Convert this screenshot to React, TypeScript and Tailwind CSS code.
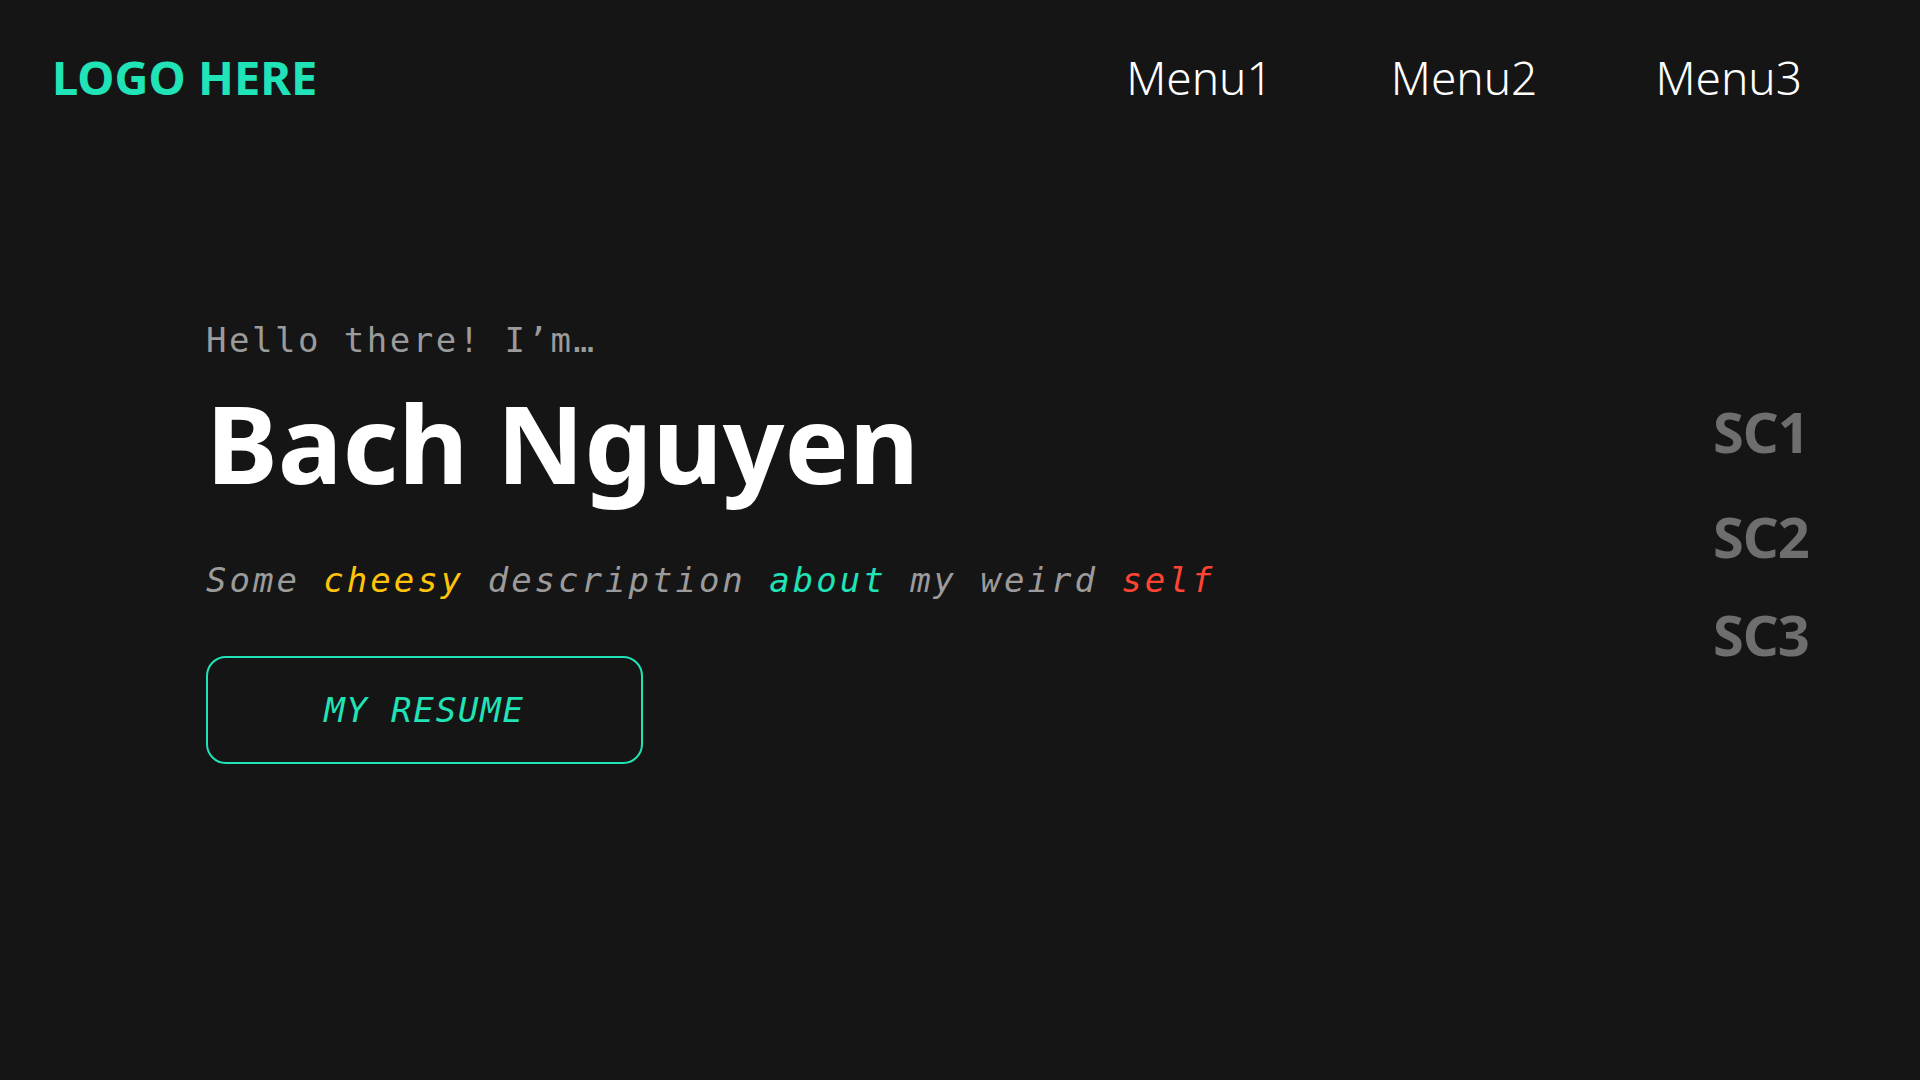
export default function App() {
  const sans = "font-['Noto_Sans',sans-serif]";
  const mono = "font-['DejaVu_Sans_Mono',monospace]";
  return (
    <div className="min-h-[1080px] w-full bg-[#151515] text-white">
      <header className="flex items-start justify-between pl-[52px] pr-[118px] pt-[54px]">
        <div className={`${sans} text-[47px] font-bold leading-[46px] text-[#21e3b8]`}>LOGO HERE</div>
        <nav className={`${sans} flex gap-[118px] text-[46px] font-light leading-[46px] text-white`}>
          <a>Menu1</a>
          <a>Menu2</a>
          <a>Menu3</a>
        </nav>
      </header>
      <main className="flex items-start justify-between pl-[206px] pr-[107px] pt-[223px]">
        <section className="flex flex-col items-start">
          <p className={`${mono} text-[34px] leading-[34px] tracking-[2.5px] text-[#9b9b9b]`}>Hello there! I’m…</p>
          <h1 className={`${sans} mt-[32px] text-[108px] font-bold leading-[108px] text-white`}>Bach Nguyen</h1>
          <p className={`${mono} mt-[66px] text-[34px] italic leading-[34px] tracking-[3px] text-[#9b9b9b]`}>
            Some <span className="text-[#ffc30b]">cheesy</span> description{" "}
            <span className="text-[#21e3b8]">about</span> my weird <span className="text-[#ff4433]">self</span>
          </p>
          <button
            className={`${mono} mt-[59px] flex h-[108px] w-[437px] items-center justify-center rounded-[20px] border-2 border-[#21e3b8] text-[34px] italic leading-[34px] tracking-[1.8px] text-[#21e3b8]`}
          >
            MY RESUME
          </button>
        </section>
        <aside className={`${sans} flex w-[100px] flex-col pt-[80px] text-[56px] font-bold leading-[56px] tracking-[-1px] text-[#6e6e6e]`}>
          <span>SC1</span>
          <span className="mt-[49px]">SC2</span>
          <span className="mt-[42px]">SC3</span>
        </aside>
      </main>
    </div>
  );
}
